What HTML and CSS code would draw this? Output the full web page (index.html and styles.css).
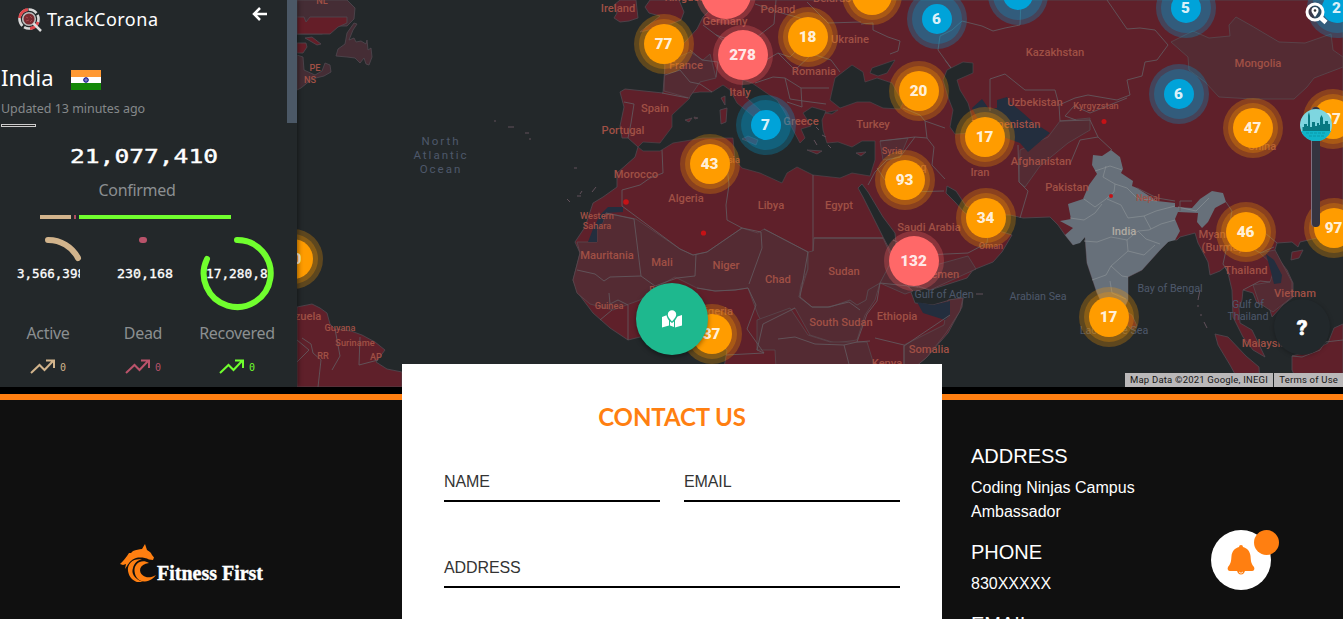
FILE: index.html
```
<!DOCTYPE html>
<html lang="en">
<head>
<meta charset="utf-8">
<title>Fitness First</title>
<link rel="stylesheet" href="styles.css">
</head>
<body>
<section class="tracker">
  <svg class="map" viewBox="0 0 1343 387" width="1343" height="387">
    <g class="land">
      <path d="M297 0H347L355 8 354 19 347 26 336 26 322 34 297 34Z" class="brown"/>
      <path d="M297 17H304L306 22 310 17H347V23L338 27 330 34 297 34Z" class="bright"/>
      <path d="M297 43H306L307 47 303 53H297Z M305 38L312 37 321 44 317 45Z" class="bright"/>
      <path d="M354 23L357 24 353 30 349 40 354 38 356 42 361 41 366 44 367 40 368 50 371 48 372 57 369 65 366 64 364 58 360 63 355 58 347 57 336 56 338 49 345 44 347 33Z" class="brown"/>
      <path d="M297 55L303 57 304 70 315 75 322 71 325 63 330 65 331 72 324 76 312 79 301 88 297 90Z" class="brown"/>
      <path d="M297 307L312 304 320 308 327 313 330 324 335 329 351 331 362 335 375 342 385 350 376 362 387 369 402 372V387H297Z"/>
      <path d="M614 5L620 0 636 0 638 18 629 21 620 22 614 18 617 13Z"/>
      <path d="M650 0H679L684 12 681 20 668 25 653 29 640 32 650 24 660 16 649 13 645 7Z"/>
      <path d="M697 29L703 17 710 10 713 0H1343V236L1317 238 1300 242 1298 247 1292 242 1277 243 1274 253 1287 270 1293 283 1293 297 1283 305 1272 317 1269 307 1257 303 1253 293 1243 290 1242 300 1239 308 1240 323 1252 330 1265 357 1253 350 1243 337 1233 317 1232 290 1228 273 1225 267 1220 271 1210 275 1208 262 1198 243 1195 233 1180 237 1177 240 1170 240 1160 250 1142 270 1128 277 1128 300 1120 317 1112 324 1097 293 1087 263 1085 237 1073 245 1065 235 1058 225 1050 217 1023 218 1010 215 985 215 966 206 956 191 947 186 946 193 955 202 964 212 980 225 1012 235 1002 252 993 262 973 270 967 278 930 290 918 287 911 283 897 253 895 233 883 217 868 192 862 184 858 188 863 197 883 237 891 252 897 272 908 284 915 303 933 305 950 300 963 298 962 307 948 333 927 357 914 368H724L727 350 708 337 690 340 665 335 640 337 628 340 610 328 593 313 578 293 573 280 580 253 575 242 585 227 593 203 603 197 617 187 617 173 635 157 638 147 628 138 622 138 620 126 624 107 620 92 625 89 663 93 665 65 653 56 673 50 684 43Z"/>
    </g>

    <g class="water">
      <path d="M638 147L643 142 660 143 672 127 672 115 690 98 685 94 700 92 712 92 723 85 730 90 737 103 754 117 758 127 763 130 765 123 773 120 760 110 747 98 742 87 743 80 752 83 765 92 777 100 785 113 792 128 800 143 805 138 801 129 811 126 803 113 812 107 826 111 822 120 823 130 827 143 838 142 852 147 862 141 875 141 875 160 870 176 852 173 840 178 813 175 797 167 787 173 782 183 760 173 742 168 735 160 733 138 703 138 673 143 660 151 643 151Z"/>
      <path d="M852 65L863 72 865 82 877 78 892 83 903 103 900 109 883 108 870 102 857 102 840 108 830 100 835 78Z"/>
      <path d="M872 68L895 60 887 73 878 76 870 73Z M825 113L838 110 832 114Z"/>
      <path d="M973 63L963 62 947 70 943 80 948 97 953 110 950 127 955 134 975 133 972 117 968 103 960 90 957 80 973 73Z"/>
    </g>

    <g class="land">
      <path d="M748 136L758 140 756 145 742 139Z M720 110L727 108 726 122 721 124Z M721 98L725 96 725 105Z M685 120L692 118 689 122Z M694 117L698 118 695 119Z M807 150L822 151 817 154Z M856 153L866 152 861 156Z"/>
      <path d="M1292 252L1303 250 1299 258 1291 260Z M1215 334L1228 337 1246 356 1259 367 1260 387H1242L1230 365 1218 345Z M1292 356L1314 350 1328 343 1334 328 1343 324V387H1300L1292 370Z M1120 308L1132 315 1137 326 1132 330 1126 324Z"/>
    </g>

    <g class="brown line">
      <path d="M577 242L597 242 597 230 603 222 606 213 636 219 680 249 693 255 707 252 742 228 758 233 764 229 808 252 808 269 801 285 799 297 812 307 830 307 850 300 857 305 866 300 868 290 880 283 875 300 865 315 857 340 835 343 810 335 795 308 763 324 758 315 748 288 735 290 715 291 697 288 675 277 655 288 640 300 613 310 590 304 577 293 573 280 580 253Z"/>
      <path d="M757 320L790 308 808 335 830 342 867 342 875 368H776L775 350 757 350Z"/>
      <path class="dim" d="M814 238L883 238 893 260 880 283 868 290 866 300 857 305 850 300 830 307 812 307 799 297 808 269 808 252 813 251Z"/>
      <path d="M880 283L890 264 900 280 913 291 905 294Z M925 268L968 256 976 269 930 290 918 286Z M904 345L944 325 948 300 963 298 960 311 946 333 927 357 914 368 904 368Z"/>
      <path d="M665 63L690 52 703 60 710 54 716 78 700 82 689 98 664 91Z"/>
      <path d="M1171 42L1193 31 1209 38 1230 36 1229 25 1236 17 1252 26 1279 42 1305 43 1331 34 1333 50 1343 57V67L1314 78 1307 87 1294 99 1253 99 1219 97 1205 82 1189 70 1188 57Z"/>
      <path d="M1060 121L1090 118 1090 130 1068 143 1040 166 1025 187 1019 182 1020 150 1048 137Z M1253 285L1270 282 1275 267 1260 253 1275 250 1292 282 1292 297 1273 312 1259 303Z M880 141L908 138 900 157 883 160Z"/>
    </g>

    <g class="blue">
      <path d="M997 100L1007 97 1012 104 1023 113 1033 122 1050 133 1028 152 1020 143 1006 138 980 123 972 108 982 99 989 109 997 108Z"/>
      <path d="M608 207H623V212L605 213 603 222 597 230V242H588L593 229 600 215Z"/>
      <path d="M917 302L933 305 950 301V315L945 320 923 313Z"/>
      <path d="M1266 254L1274 260 1282 275 1281 283 1274 284 1271 272Z"/>
    </g>

    <path class="india" d="M1093 155L1102 156 1111 150 1120 157 1123 169 1121 173 1133 181 1132 186 1137 188 1157 201 1175 203 1175 207 1192 208 1200 199 1212 191 1223 193 1226 202 1215 208 1208 222 1202 228 1197 222 1198 213 1178 212 1175 219 1180 231 1175 240 1168 242 1160 250 1142 270 1128 277 1128 300 1120 317 1111 323 1097 293 1087 263 1085 237 1080 243 1073 245 1065 235 1073 228 1060 221 1071 219 1068 204 1083 199 1089 185 1097 174 1092 165Z"/>
    <path class="states" d="M1095 171L1110 166 1122 170M1106 166L1103 177 1115 184 1114 192 1106 199 1095 207 1084 199M1115 184L1127 188 1137 198 1157 201M1107 199L1121 205 1128 218 1144 216 1156 211 1175 206M1070 218L1084 220 1095 213 1102 204M1084 241L1097 242 1111 237 1127 240 1138 231 1149 230 1161 224 1175 220M1144 216L1151 229M1127 240L1128 251 1119 259 1111 266 1106 275 1092 280M1128 251L1144 255 1155 245M1111 266L1122 276 1128 277M1110 281L1112 293 1126 299M1178 207L1196 211 1209 198M1138 231L1146 239 1160 244"/>

    <g class="borders">
      <path d="M624 102L634 104 631 123 628 138M662 93L688 98M665 75L680 70 690 82 700 84 712 92M690 50L702 60 718 62 716 77M703 25L724 41 738 31 757 37 774 24 776 0M716 35L730 40 724 55M759 64L778 53 790 57 803 44 800 18 778 12 755 4M807 2L828 23 861 22M778 53L795 70 812 54 831 60 840 72M755 83L773 77 785 78 801 88 802 107 787 102M801 88L829 88M785 78L790 99 803 101M803 101L826 104"/>
      <path d="M861 24L873 23 873 30 888 37 900 41 898 51 890 54M945 60L951 68 938 50 940 36 952 30 962 21 982 26 993 31 1005 28 1020 25 1021 0M990 111V79L1005 74 1025 90 1055 90 1059 105 1075 98 1088 95 1117 100 1130 95 1127 80 1142 76 1145 62 1157 60 1168 45 1155 30 1140 28 1127 29 1107 0M1059 105L1060 121 1090 120 1098 137 1080 140 1070 164M1076 120L1065 116 1074 106 1090 113 1127 98M1098 137L1112 150"/>
      <path d="M903 108L920 115 925 121 945 128M925 121L927 138 934 147 932 165 945 179M880 141L915 137 927 138M877 168L885 180 907 192 944 191M868 185L875 172 887 160 900 157 915 137M893 240L925 255 968 253 987 243 988 235M1018 145L1019 182 1028 191 1020 218M1137 188L1157 198 1175 201M1180 211L1180 201 1192 201M1226 202L1232 211 1229 227 1238 238 1250 235 1265 233 1277 243M1230 275L1223 264 1227 246 1239 240 1260 253 1274 247M1243 290L1260 281 1270 282"/>
      <path d="M662 150L663 173 650 178 640 185 622 190 622 206 680 249 693 255 707 252 742 228 727 220 726 205 729 185 727 166M606 213L634 219 641 276 610 277 604 281M641 276L655 286 677 278 695 276 696 254M742 228L761 232 762 248 749 284M764 229L808 252M813 175V251M814 238H883M808 252L800 297M857 342L867 314 877 301 880 283 918 287M904 368V346L950 315M875 338L904 345M697 288L715 291 735 290 748 288 756 305 747 329 764 353 726 355M800 297L812 307 828 307 849 302 860 310M795 308L763 324 757 350 764 353M778 339L795 337 815 344 844 345 850 368M844 345L857 342 870 341M628 340V305L618 300 610 304 609 293M612 310L600 320M604 281L595 274 577 270"/>
      <path d="M297 340L309 350 297 362M302 338L311 344 313 353 321 360 318 387M335 329L340 356 332 370M360 337L359 365 378 360M1292 356L1302 357 1320 350 1325 342 1343 340"/>
    </g>
    <g class="specks"><path d="M494 121h2M508 127h6M525 133h4M529 139h2M574 168h3M567 199l3 3M577 196h4M580 194l2-3M592 192l4-5M816 127l3 3M822 135l4 2M814 140l3 5M828 145l3 3M976 294h7M1200 290l-2 10M1198 305v2M1201 314v2M1204 322l3 6"/></g>

    <g class="labels">
      <text x="322" y="4" class="s">NL</text><text x="315" y="71" class="s">PE</text><text x="310" y="83" class="s">NS</text>
      <text x="618" y="12">Ireland</text><text x="687" y="1">Kingdom</text>
      <text x="778" y="13">Poland</text><text x="832" y="2">Belarus</text><text x="850" y="43">Ukraine</text>
      <text x="725" y="25">Germany</text><text x="686" y="69">France</text><text x="814" y="75">Romania</text>
      <text x="740" y="96">Italy</text><text x="655" y="112">Spain</text><text x="623" y="134">Portugal</text>
      <text x="801" y="125">Greece</text><text x="873" y="128">Turkey</text><text x="636" y="178">Morocco</text>
      <text x="725" y="163" class="s">Tunisia</text><text x="686" y="202">Algeria</text><text x="771" y="209">Libya</text><text x="839" y="209">Egypt</text>
      <text x="597" y="219" class="s">Western</text><text x="597" y="229" class="s">Sahara</text>
      <text x="607" y="259">Mauritania</text><text x="662" y="266">Mali</text><text x="726" y="269">Niger</text><text x="778" y="283">Chad</text>
      <text x="844" y="275">Sudan</text><text x="841" y="326">South Sudan</text><text x="897" y="320">Ethiopia</text><text x="929" y="353">Somalia</text>
      <text x="887" y="367">Kenya</text><text x="609" y="309" class="s">Guinea</text><text x="665" y="293" class="s">Burkina</text><text x="715" y="315">Nigeria</text>
      <text x="892" y="154" class="s">Syria</text><text x="917" y="171">Iraq</text><text x="980" y="176">Iran</text><text x="929" y="231">Saudi Arabia</text>
      <text x="991" y="249" class="s">Oman</text><text x="942" y="278">Yemen</text><text x="1055" y="56">Kazakhstan</text><text x="1035" y="106">Uzbekistan</text>
      <text x="1006" y="128">Turkmenistan</text><text x="1096" y="109" class="s">Kyrgyzstan</text><text x="1041" y="165">Afghanistan</text><text x="1067" y="191">Pakistan</text>
      <text x="1148" y="201" class="s">Nepal</text><text x="1258" y="67">Mongolia</text><text x="1262" y="150">China</text>
      <text x="1222" y="238">Myanmar</text><text x="1222" y="251">(Burma)</text><text x="1246" y="274">Thailand</text><text x="1295" y="297">Vietnam</text><text x="1264" y="347">Malaysia</text>
      <text x="308" y="320">zuela</text><text x="340" y="331" class="s">Guyana</text><text x="355" y="346" class="s">Suriname</text><text x="323" y="359" class="s">RR</text><text x="376" y="360" class="s">AP</text>
      <text x="1124" y="235" class="pale">India</text>
      <g class="sea"><text x="441" y="145" class="ocean">North</text><text x="441" y="159" class="ocean">Atlantic</text><text x="441" y="173" class="ocean">Ocean</text>
      <text x="944" y="298">Gulf of Aden</text><text x="1038" y="300">Arabian Sea</text><text x="1170" y="292">Bay of Bengal</text><text x="1114" y="334">Laccadive Sea</text><text x="1248" y="308">Gulf of</text><text x="1248" y="320">Thailand</text></g>
    </g>
    <g class="dots"><circle cx="626" cy="202" r="2.8"/><circle cx="703.500" cy="233" r="2.6"/><circle cx="1104" cy="121.500" r="2.5"/><circle cx="1111" cy="196" r="2"/></g>

    <g class="cluster orange">
      <g><circle cx="664" cy="44" r="30"/><circle cx="664" cy="44" r="25"/><circle cx="664" cy="44" r="20" class="core"/><text x="663.500" y="49">77</text></g>
      <g><circle cx="808" cy="37" r="30"/><circle cx="808" cy="37" r="25"/><circle cx="808" cy="37" r="20" class="core"/><text x="807.500" y="42">18</text></g>
      <g><circle cx="872" cy="-5" r="30"/><circle cx="872" cy="-5" r="25"/><circle cx="872" cy="-5" r="20" class="core"/></g>
      <g><circle cx="919" cy="91" r="30"/><circle cx="919" cy="91" r="25"/><circle cx="919" cy="91" r="20" class="core"/><text x="918.500" y="96">20</text></g>
      <g><circle cx="985" cy="137" r="30"/><circle cx="985" cy="137" r="25"/><circle cx="985" cy="137" r="20" class="core"/><text x="984.500" y="142">17</text></g>
      <g><circle cx="710" cy="164" r="30"/><circle cx="710" cy="164" r="25"/><circle cx="710" cy="164" r="20" class="core"/><text x="709.500" y="169">43</text></g>
      <g><circle cx="905" cy="180" r="30"/><circle cx="905" cy="180" r="25"/><circle cx="905" cy="180" r="20" class="core"/><text x="904.500" y="185">93</text></g>
      <g><circle cx="986" cy="218" r="30"/><circle cx="986" cy="218" r="25"/><circle cx="986" cy="218" r="20" class="core"/><text x="985.500" y="223">34</text></g>
      <g><circle cx="712" cy="334" r="30"/><circle cx="712" cy="334" r="25"/><circle cx="712" cy="334" r="20" class="core"/><text x="711.500" y="339">37</text></g>
      <g><circle cx="293" cy="259" r="30"/><circle cx="293" cy="259" r="25"/><circle cx="293" cy="259" r="20" class="core"/><text x="292.500" y="264">10</text></g>
      <g><circle cx="1109" cy="317" r="30"/><circle cx="1109" cy="317" r="25"/><circle cx="1109" cy="317" r="20" class="core"/><text x="1108.500" y="322">17</text></g>
      <g><circle cx="1253" cy="128" r="30"/><circle cx="1253" cy="128" r="25"/><circle cx="1253" cy="128" r="20" class="core"/><text x="1252.500" y="133">47</text></g>
      <g><circle cx="1246" cy="232" r="30"/><circle cx="1246" cy="232" r="25"/><circle cx="1246" cy="232" r="20" class="core"/><text x="1245.500" y="237">46</text></g>
      <g><circle cx="1333" cy="119" r="30"/><circle cx="1333" cy="119" r="25"/><circle cx="1333" cy="119" r="20" class="core"/><text x="1332" y="124">97</text></g>
      <g><circle cx="1334" cy="228" r="30"/><circle cx="1334" cy="228" r="25"/><circle cx="1334" cy="228" r="20" class="core"/><text x="1333.500" y="233">97</text></g>
    </g>
    <g class="cluster pink">
      <g><circle cx="726" cy="-6" r="30"/><circle cx="726" cy="-6" r="25" class="core"/></g>
      <g><circle cx="743" cy="55" r="30"/><circle cx="743" cy="55" r="25" class="core"/><text x="742.500" y="60">278</text></g>
      <g><circle cx="914" cy="261" r="30"/><circle cx="914" cy="261" r="25" class="core"/><text x="913.500" y="266">132</text></g>
    </g>
    <g class="cluster cyan">
      <g><circle cx="766" cy="125" r="30"/><circle cx="766" cy="125" r="25"/><circle cx="766" cy="125" r="15" class="core"/><text x="765.500" y="130">7</text></g>
      <g><circle cx="937" cy="19" r="30"/><circle cx="937" cy="19" r="25"/><circle cx="937" cy="19" r="15" class="core"/><text x="936.500" y="24">6</text></g>
      <g><circle cx="1018" cy="-5" r="30"/><circle cx="1018" cy="-5" r="25"/><circle cx="1018" cy="-5" r="15" class="core"/></g>
      <g><circle cx="1186" cy="8" r="30"/><circle cx="1186" cy="8" r="25"/><circle cx="1186" cy="8" r="15" class="core"/><text x="1185.500" y="13">5</text></g>
      <g><circle cx="1179" cy="94" r="30"/><circle cx="1179" cy="94" r="25"/><circle cx="1179" cy="94" r="15" class="core"/><text x="1178.500" y="99">6</text></g>
      <g><circle cx="1337" cy="8" r="30"/><circle cx="1337" cy="8" r="25"/><circle cx="1337" cy="8" r="15" class="core"/><text x="1336.500" y="13">2</text></g>
    </g>
  </svg>

  <aside class="panel">
    <header class="panel-head">
      <svg width="26" height="26" viewBox="0 0 26 26" class="mark">
        <circle cx="11" cy="12" r="9.500" fill="none" stroke="#d8d8d8" stroke-width="2.600" stroke-dasharray="9 2"/>
        <path d="M1.500 11A9.500 9.500 0 0 1 10 2.500M20 15A9.500 9.500 0 0 1 12 21.500" fill="none" stroke="#e0474c" stroke-width="2.800"/>
        <circle cx="11" cy="12" r="6.300" fill="#7a2a30" stroke="#bbb" stroke-width="1.600"/>
        <path d="M8 10l2 1M12 9l2 2M8 14l3-1M12 15l2-2" stroke="#a5474d"/>
        <path d="M15.500 16.500L23 24" stroke="#ddd" stroke-width="2.500"/>
      </svg>
      <span class="brand">TrackCorona</span>
      <svg class="back" width="16" height="15" viewBox="0 0 16 15"><path d="M15 7H2M8 1L2 7 8 13" fill="none" stroke="#fff" stroke-width="2.500"/></svg>
    </header>
    <div class="country"><span>India</span>
      <svg width="30" height="20" viewBox="0 0 30 20"><path fill="#ff9933" d="M0 0h30v7H0z"/><path fill="#fff" d="M0 7h30v6H0z"/><path fill="#138808" d="M0 13h30v7H0z"/><circle cx="15" cy="10" r="2.300" fill="#7777bb" stroke="#000088"/></svg>
    </div>
    <p class="updated">Updated 13 minutes ago</p>
    <div class="rule"></div>
    <div class="total"><svg width="150" height="24"><text x="1" y="18.500" textLength="148" lengthAdjust="spacingAndGlyphs">21,077,410</text></svg></div>
    <p class="stat-name">Confirmed</p>
    <div class="split"><i class="tan"></i><i class="rose"></i><i class="lime"></i></div>
    <div class="stats">
      <div class="stat tan-c"><svg class="ring" width="74" height="80" viewBox="0 0 74 80"><path d="M37 7A33.500 33.500 0 0 1 67 25"/><text x="6" y="45" textLength="68" lengthAdjust="spacingAndGlyphs">3,566,398</text><path class="mask" d="M69 30h6v20h-6z"/></svg><p class="stat-name">Active</p><div class="trend"><svg width="26" height="16"><path d="M1 14L9.500 6 14.500 11 23 2M16 1.500H24V9"/></svg><b>0</b></div></div>
      <div class="stat rose-c"><svg class="ring" width="74" height="80" viewBox="0 0 74 80"><path d="M36 7h2"/><text x="11" y="45" textLength="56" lengthAdjust="spacingAndGlyphs">230,168</text></svg><p class="stat-name">Dead</p><div class="trend"><svg width="26" height="16"><path d="M1 14L9.500 6 14.500 11 23 2M16 1.500H24V9"/></svg><b>0</b></div></div>
      <div class="stat lime-c"><svg class="ring" width="74" height="80" viewBox="0 0 74 80"><text x="6" y="45" textLength="77" lengthAdjust="spacingAndGlyphs">17,280,851</text><path class="mask" d="M68 30h6v20h-6z"/><path d="M37 7A33.500 33.500 0 1 1 7 26"/></svg><p class="stat-name">Recovered</p><div class="trend"><svg width="26" height="16"><path d="M1 14L9.500 6 14.500 11 23 2M16 1.500H24V9"/></svg><b>0</b></div></div>
    </div>
    <div class="thumb"></div>
  </aside>

  <svg class="find" width="24" height="24" viewBox="0 0 24 24"><circle cx="10" cy="10" r="8" fill="#23282a55" stroke="#fff" stroke-width="3"/><path d="M15.500 15.500L21 20.500" stroke="#fff" stroke-width="4.500"/><path d="M10 15C7 11 6.500 10 6.500 8.500a3.500 3.500 0 0 1 7 0C13.500 10 13 11 10 15Z" fill="#fff"/><circle cx="10" cy="8.500" r="1.300" fill="#333"/></svg>
  <div class="slider"></div>
  <svg class="knob" width="32" height="32" viewBox="0 0 32 32"><circle cx="16" cy="16" r="16" fill="#7ed6e0"/><path d="M2.500 24V18H4V15H7V17H8V6L9 3 10 7V18H12V13H15V17H17V14H19V16H20V9L21.500 6 23 9V15H25V12H28V15H30V22L27 25Z" fill="#087982"/><path d="M1 22H31A16 16 0 0 1 1 22Z" fill="#10b4c8"/><path d="M6 24H26M9 27H24" stroke="#0a98a8" stroke-width="1" stroke-dasharray="3 1"/></svg>
  <div class="help">?</div>
  <div class="map-button"><svg width="20" height="18" viewBox="0 0 20 18"><path fill="#fff" d="M0 7L4.500 5.200C5 7.500 6 9 7 10.500V15.500L0 17.500Z M8 11.500L10 13 12 11.500V17L8 15.500Z M13 10.500L15.500 6.500 20 5V15.500L13 17.500Z M10 11.500C7 8 5.800 6.500 5.800 4.500a4.200 4.200 0 0 1 8.400 0C14.200 6.500 13 8 10 11.500Z"/></svg></div>
  <div class="credits"><span>Map Data ©2021 Google, INEGI</span><span>Terms of Use</span></div>
</section>

<footer class="footer">
  <div class="logo">
    <svg width="146" height="46" viewBox="0 0 146 46">
      <path fill="#ff7f11" d="M0 20C3 17 5 15 7 12L9 9 11 9 13 7C16 5.500 19 5.500 22 5L25 0 27 6C30 7.500 31 9 32 11L34 13.500 33 16 29 15.500C25 13.500 20 13 16 14 11 15.500 9 19 7 22L5 25 6 20 3 21Z"/>
      <path fill="#ff7f11" d="M22 15.500C14 14 7 19 8 27 9 33 12 36 17 38H23C14 35 11 29 13 24 14 19 18 16 22 15.500Z"/>
      <path fill="#ff7f11" d="M29 19C22 14.500 14 19 14.500 27 15 34 20 38 25 37.500 30 37 34 34 36 31 31 34 26 34 23 31.500 18 28 19 20 29 19Z"/>
      <text x="37" y="36" textLength="106" lengthAdjust="spacingAndGlyphs">Fitness First</text>
    </svg>
  </div>
  <form class="card">
    <h2>CONTACT US</h2>
    <div class="fields">
      <div class="field">NAME</div>
      <div class="field">EMAIL</div>
      <div class="field wide">ADDRESS</div>
    </div>
  </form>
  <address class="details">
    <h3>ADDRESS</h3><p>Coding Ninjas Campus<br>Ambassador</p>
    <h3>PHONE</h3><p>830XXXXX</p>
    <h3>EMAIL</h3>
  </address>
</footer>
<div class="bell">
  <svg width="28" height="32" viewBox="0 0 28 32"><path fill="#ff7f11" d="M12 3a2 2 0 1 1 4 0C20 4 23 7 23.500 12 24 18 24 19 27 23 28 25 27 27 25 27H3C1 27 0 25 1 23 4 19 4 18 4.500 12 5 7 8 4 12 3ZM10 26H18A4 4.500 0 0 1 10 26Z"/><path d="M12 28q2 2.500 4 0" fill="none" stroke="#fff" stroke-width=".8"/></svg>
  <i class="badge"></i>
</div>
</body>
</html>
```
FILE: styles.css
```
* { box-sizing: border-box; }
body { margin: 0; height: 619px; overflow: hidden; position: relative; background: #000; font-family: "Liberation Sans", Arial, sans-serif; }
h2, h3, p { margin: 0; font-weight: 400; }

.tracker { position: relative; height: 387px; overflow: hidden; background: #23282a; }
.map { display: block; }
.land { fill: #5f202a; stroke: #514951; stroke-width: .8; }
.water { fill: #23282a; stroke: #514951; stroke-width: .6; }
.brown { fill: #542b33; }
.brown .dim { fill: #58272f; }
.land .brown { fill: #452d35; }
.line { stroke: #59494f; stroke-width: .8; }
.bright { fill: #641e28; }
.blue { fill: #232e3e; }
.india { fill: #67707a; }
.states { fill: none; stroke: #8a9095; stroke-width: .7; }
.borders { fill: none; stroke: #62575c; stroke-width: .9; }
.specks { fill: none; stroke: #62505a; stroke-width: 1; }
.labels { fill: #a05045; font: 500 11.2px Roboto, sans-serif; text-anchor: middle; }
.labels .s { font-size: 9.2px; }
.labels .pale { fill: #b0aaa2; }
.sea { fill: #4e586b; font-weight: 400; font-size: 10.7px; }
.sea .ocean { font-size: 11.5px; letter-spacing: 2px; }
.dots { fill: #c51216; }
.cluster circle { fill-opacity: .27; }
.cluster .core { fill-opacity: 1; }
.cluster text { fill: #fff; fill-opacity: .87; font: 900 15.300px Roboto, sans-serif; text-anchor: middle; }
.orange circle { fill: #ff9c00; }
.pink circle { fill: #ff6868; }
.cyan circle { fill: #00a3d9; }

.panel { position: absolute; inset: 0 auto 0 0; width: 297px; padding-right: 23px; background: #23282a; color: #fff; font-family: "Noto Sans", sans-serif; box-shadow: 1px 0 5px #0007; }
.panel-head { display: flex; align-items: flex-start; height: 63px; padding: 7px 5px 0 18px; width: 274px; }
.brand { margin-left: 3px; font-size: 18px; line-height: 25px; letter-spacing: .5px; flex: 1; }
.back { margin-right: 1px; }
.country { display: flex; align-items: center; gap: 17px; height: 29px; padding-left: 1px; font-size: 22px; line-height: 29px; }
.country svg { margin-top: 4px; }
.updated { margin-top: 7px; padding-left: 1px; height: 20px; font-size: 12.500px; line-height: 20px; letter-spacing: -.04px; color: #85888a; }
.rule { width: 35px; height: 3px; margin: 5px 0 0 1px; border: 1px solid #ccc; background: #222; }
.total { display: flex; justify-content: center; margin-top: 17px; padding-left: 13px; height: 34px; }
.total text { fill: #fff; stroke: #fff; stroke-width: .4; font: 19.500px "DejaVu Sans Mono", monospace; }
.stat-name { text-align: center; font-size: 16px; line-height: 24px; color: #8b8f91; letter-spacing: -.3px; }
.total + .stat-name { height: 37px; }
.split { display: flex; gap: 3px; margin-left: 40px; height: 4px; }
.tan { width: 31px; background: #d2b48c; }
.rose { width: 2px; background: #b05060; }
.lime { width: 152px; background: #70ff2e; }
.stats { display: grid; grid-template-columns: 96px 94px 94px; margin-top: 14px; }
.stat { display: flex; flex-direction: column; align-items: center; }
.stat .stat-name { margin-top: 8px; white-space: nowrap; }
.ring { overflow: hidden; }
.ring path { fill: none; stroke: currentColor; stroke-width: 6; stroke-linecap: round; }
.ring .mask { fill: #23282a; stroke: none; }
.ring text { fill: #fff; font: 12px "DejaVu Sans Mono", monospace; stroke: #fff; stroke-width: .3; }
.tan-c { color: #d2b48c; }
.rose-c { color: #b9536a; }
.lime-c { color: #70ff2e; }
.trend { display: flex; align-items: center; gap: 4px; margin-top: 13px; height: 18px; }
.trend path { fill: none; stroke: currentColor; stroke-width: 2; }
.trend b { font: 10px "DejaVu Sans Mono", monospace; }
.thumb { position: absolute; top: 0; right: 0; width: 10px; height: 123px; background: #4b5866; }

.find { position: absolute; left: 1305px; top: 2px; }
.slider { position: absolute; left: 1311px; top: 107px; width: 9px; height: 120px; border-left: 1px solid #807080; border-radius: 4px; background: #353440; }
.knob { position: absolute; left: 1300px; top: 109px; }
.help { position: absolute; left: 1274px; top: 299px; width: 56px; height: 56px; border-radius: 50%; background: #22282b; color: #fff; font: 900 21px/58px Roboto, sans-serif; -webkit-text-stroke: .6px #fff; text-align: center; box-shadow: 0 1px 4px #0004; }
.map-button { position: absolute; left: 636px; top: 283px; width: 72px; height: 72px; border-radius: 50%; background: #1eb88e; display: grid; place-items: center; box-shadow: 0 2px 5px #0006; }
.credits { position: absolute; right: 0; bottom: 0; width: 218px; display: flex; gap: 1px; height: 14px; font: 9.500px/14px Roboto, sans-serif; letter-spacing: .2px; color: #161616; white-space: nowrap; }
.credits span { background: #bab8b9; padding: 0 5px; }
.credits span:first-child { width: 150px; }
.credits span:last-child { flex: 1; }

.footer { display: grid; grid-template-columns: 402px 540px 401px; height: 225px; margin-top: 7px; border-top: 6px solid #ff7f11; background: #101010; }
.logo { padding: 144px 0 0 120px; }
.logo text { fill: #fff; stroke: #fff; stroke-width: .4; font: 700 20.500px "Liberation Serif", serif; }
.card { position: relative; height: 255px; margin-top: -36px; padding: 38px 42px 0; background: #fff; }
.card h2 { font: 700 24px/30px Lato, sans-serif; color: #ff7f11; text-align: center; letter-spacing: -.1px; }
.fields { display: grid; grid-template-columns: 1fr 1fr; column-gap: 24px; row-gap: 46px; margin-top: 30px; }
.field { height: 40px; border-bottom: 2px solid #000; font-size: 16px; line-height: 40px; letter-spacing: -.1px; color: #333; }
.wide { grid-column: span 2; }
.details { padding: 44px 0 0 29px; font-style: normal; color: #fff; }
.details h3 { font-size: 20px; line-height: 24px; margin-bottom: 8px; }
.details p { font-size: 16px; line-height: 24px; margin-bottom: 16px; }
.bell { position: absolute; left: 1211px; top: 530px; width: 60px; height: 60px; border-radius: 50%; background: #fff; display: grid; place-items: center; }
.badge { position: absolute; right: -8px; top: 0; width: 25px; height: 25px; border-radius: 50%; background: #ff7f11; }
```
